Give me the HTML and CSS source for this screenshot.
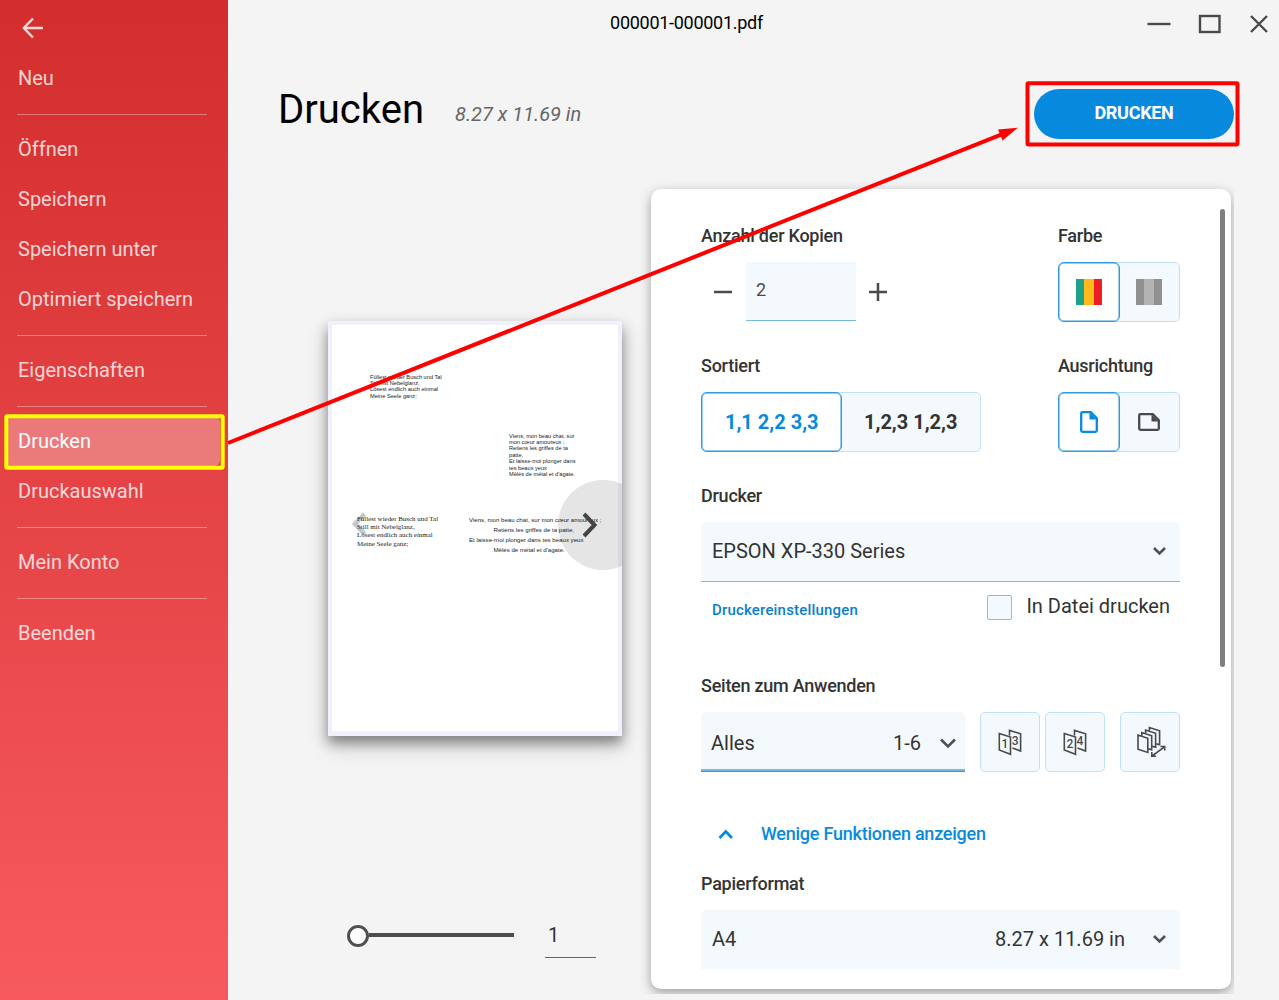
FILE: index.html
```
<!DOCTYPE html>
<html lang="de">
<head>
  <meta charset="UTF-8" />
  <meta name="viewport" content="width=device-width, initial-scale=1.0"/>
  <title>000001-000001.pdf</title>
  <link rel="stylesheet" href="styles.css">
</head>
<body>

<nav class="sidebar">
  <a class="back">
    <svg width="22" height="22" viewBox="0 0 22 22"><path d="M21 11H2M11 1.5L1.8 11L11 20.5"/></svg>
  </a>
  <a class="item">Neu</a>
  <hr>
  <a class="item">Öffnen</a>
  <a class="item">Speichern</a>
  <a class="item">Speichern unter</a>
  <a class="item">Optimiert speichern</a>
  <hr>
  <a class="item">Eigenschaften</a>
  <hr>
  <a class="item active">Drucken</a>
  <a class="item">Druckauswahl</a>
  <hr>
  <a class="item">Mein Konto</a>
  <hr>
  <a class="item">Beenden</a>
</nav>

<main class="main">
  <div class="titlebar">
    <div class="file-name">000001-000001.pdf</div>
    <svg class="window-icons" width="130" height="46" viewBox="1145 0 130 46">
      <path d="M1147.5 24H1170.5"/>
      <rect x="1200" y="16" width="19.5" height="16"/>
      <path d="M1251 16L1267 32M1267 16L1251 32"/>
    </svg>
  </div>

  <div class="header">
    <h1>Drucken</h1>
    <span class="page-size">8.27 x 11.69 in</span>
    <button class="print-btn">DRUCKEN</button>
  </div>

  <div class="content">
    <div class="preview">
      <div class="page">
        <p class="poem goethe">Füllest wieder Busch und Tal<br>Still mit Nebelglanz,<br>Lösest endlich auch einmal<br>Meine Seele ganz;</p>
        <p class="poem chat">Viens, mon beau chat, sur<br>mon cœur amoureux ;<br>Retiens les griffes de ta<br>patte,<br>Et laisse-moi plonger dans<br>tes beaux yeux<br>Mêlés de métal et d'agate.</p>
        <p class="poem goethe-serif">Füllest wieder Busch und Tal<br>Still mit Nebelglanz,<br>Lösest endlich auch einmal<br>Meine Seele ganz;</p>
        <p class="poem chat-wide">Viens, mon beau chat, sur mon cœur amoureux ;<br><span>Retiens les griffes de ta patte,</span><br>Et laisse-moi plonger dans tes beaux yeux<br><span>Mêlés de métal et d'agate.</span></p>
        <svg class="prev" width="16" height="24" viewBox="0 0 16 24"><path d="M13.5 2L4 12L13.5 22"/></svg>
        <div class="next">
          <svg width="16" height="26" viewBox="0 0 16 26"><path d="M2 2L12.5 13L2 24"/></svg>
        </div>
      </div>
      <div class="pager">
        <div class="knob"></div>
        <div class="track"></div>
        <div class="page-no">1</div>
      </div>
    </div>

    <section class="panel">
      <div class="row">
        <div class="group">
          <label>Anzahl der Kopien</label>
          <div class="copies">
            <svg width="44" height="60" viewBox="0 0 44 60"><path d="M13 30H31"/></svg>
            <div class="number">2</div>
            <svg width="44" height="60" viewBox="0 0 44 60"><path d="M13 30H31M22 21V39"/></svg>
          </div>
        </div>
        <div class="group right">
          <label>Farbe</label>
          <div class="toggle">
            <div class="option selected"><i class="stripes color"></i></div>
            <div class="option"><i class="stripes gray"></i></div>
          </div>
        </div>
      </div>

      <div class="row">
        <div class="group">
          <label>Sortiert</label>
          <div class="toggle wide">
            <div class="option selected">1,1 2,2 3,3</div>
            <div class="option">1,2,3 1,2,3</div>
          </div>
        </div>
        <div class="group right">
          <label>Ausrichtung</label>
          <div class="toggle">
            <div class="option selected">
              <svg class="doc" width="18" height="22" viewBox="0 0 18 22"><path d="M2.5 1.2H10.8L16.8 7.2V19.5Q16.8 20.8 15.5 20.8H2.5Q1.2 20.8 1.2 19.5V2.5Q1.2 1.2 2.5 1.2Z"/><path class="fold" d="M9.5 1.2V8.5H16.8Z"/></svg>
            </div>
            <div class="option">
              <svg class="doc" width="22" height="18" viewBox="0 0 22 18"><path d="M2.5 1.2H14.8L20.8 7.2V15.5Q20.8 16.8 19.5 16.8H2.5Q1.2 16.8 1.2 15.5V2.5Q1.2 1.2 2.5 1.2Z"/><path class="fold" d="M13.5 1.2V8.5H20.8Z"/></svg>
            </div>
          </div>
        </div>
      </div>

      <label>Drucker</label>
      <div class="select">
        <span>EPSON XP-330 Series</span>
        <svg class="chevron" width="14" height="10" viewBox="0 0 14 10"><path d="M2 2L7.5 7.5L13 2"/></svg>
      </div>
      <div class="printer-row">
        <a>Druckereinstellungen</a>
        <i class="checkbox"></i>
        <span>In Datei drucken</span>
      </div>

      <label>Seiten zum Anwenden</label>
      <div class="pages">
        <div class="select focus">
          <span>Alles</span>
          <span class="value">1-6</span>
          <svg class="chevron" width="18" height="12" viewBox="0 0 18 12"><path d="M2 2.5L9 9.5L16 2.5"/></svg>
        </div>
        <div class="icon-btn">
          <svg width="58" height="58" viewBox="1 1 58 58"><path d="M19.3 21.5L30.5 25V42.3L19.3 38ZM29.5 23.5V18.4L40.6 21.8V39L32.5 36"/><text x="21.6" y="36">1</text><text x="31.7" y="32.8">3</text></svg>
        </div>
        <div class="icon-btn">
          <svg width="58" height="58" viewBox="1 1 58 58"><path d="M19.3 21.5L30.5 25V42.3L19.3 38ZM29.5 23.5V18.4L40.6 21.8V39L32.5 36"/><text x="21.5" y="36">2</text><text x="31.5" y="32.8">4</text></svg>
        </div>
        <div class="icon-btn last">
          <svg width="58" height="58" viewBox="1 1 58 58"><path d="M18 23L27.8 26.3V40.5L18 37.2ZM21.8 23.5V20.5L31.7 23.8V37.8L28.5 36.8M25.6 21V18L35.6 21.3V35.3L32.4 34.3M29.4 18.5V15.5L39.6 18.8V32.8L36 31.8"/><path d="M32 44L44.5 34.8M40.5 34.5H44.7V38.5M31.8 40V44.3H36"/></svg>
        </div>
      </div>

      <div class="less">
        <svg width="16" height="10" viewBox="0 0 16 10"><path d="M1.5 9L7.8 2.5L14 9"/></svg>
        <a>Wenige Funktionen anzeigen</a>
      </div>

      <label>Papierformat</label>
      <div class="select plain">
        <span>A4</span>
        <span class="value">8.27 x 11.69 in</span>
        <svg class="chevron" width="14" height="10" viewBox="0 0 14 10"><path d="M2 2L7.5 7.5L13 2"/></svg>
      </div>
      <div class="scrollbar"></div>
    </section>
  </div>
</main>

<!-- tutorial marks over the window -->
<svg class="marks" width="1279" height="1000" viewBox="0 0 1279 1000">
  <rect class="mark-yellow" x="6.3" y="416.3" width="216.4" height="51.4" rx="1"/>
  <path class="mark-red" d="M228 443L1003 133.8"/>
  <path class="mark-head" d="M1017.8 127.7L998 129.5L1002.6 140.5Z"/>
  <rect class="mark-red" x="1027.5" y="83.3" width="210" height="61.2" rx="1"/>
</svg>

</body>
</html>
```
FILE: styles.css
```
* {
  box-sizing: border-box;
}
body {
  margin: 0;
  width: 1279px;
  height: 1000px;
  display: flex;
  overflow: hidden;
  font-family: Roboto, "Liberation Sans", sans-serif;
  font-size: 20px;
  background: #f4f4f4;
  color: #333;
}
svg {
  display: block;
  fill: none;
}

/* sidebar */
.sidebar {
  width: 228px;
  height: 1000px;
  flex: none;
  background: linear-gradient(#d32d2d, #f75a5e);
}
.back {
  display: block;
  height: 53px;
  padding: 17px 0 0 22px;
}
.back svg {
  stroke: #fadada;
  stroke-width: 2.4;
}
.item {
  display: block;
  height: 50px;
  line-height: 50px;
  margin: 0 8px 0 5px;
  padding-left: 13px;
  color: rgba(255,255,255,0.8);
}
.item.active {
  background: rgba(255,255,255,0.3);
  border-radius: 0 6px 6px 0;
  color: white;
}
.sidebar hr {
  height: 1px;
  border: none;
  margin: 11px 21px 9px 17px;
  background: rgba(255,255,255,0.35);
}

/* window */
.main {
  flex: 1;
}
.titlebar {
  height: 46px;
  display: flex;
  justify-content: flex-end;
}
.file-name {
  flex: 1;
  line-height: 45px;
  text-align: center;
  font-size: 18px;
  letter-spacing: -0.28px;
  color: black;
}
.window-icons {
  margin-right: 4px;
  stroke: #4a4a4a;
  stroke-width: 2.4;
}
.header {
  height: 143px;
  display: flex;
  padding: 43px 45px 0 50px;
}
h1 {
  margin: 0;
  font-size: 40px;
  font-weight: normal;
  line-height: 42px;
  color: black;
}
.page-size {
  margin-left: 31px;
  line-height: 50px;
  font-style: italic;
  color: #666;
}
.print-btn {
  width: 200px;
  height: 50px;
  margin-left: auto;
  border: none;
  border-radius: 25px;
  background: #078ade;
  color: white;
  font-family: inherit;
  font-size: 18px;
  font-weight: bold;
  letter-spacing: -0.3px;
  padding: 0 0 3px;
}
.content {
  display: flex;
}

/* preview */
.preview {
  width: 423px;
  padding: 132px 0 0 100px;
}
.page {
  position: relative;
  width: 294px;
  height: 415px;
  border: 4px solid #f1f1fe;
  border-bottom-width: 5px;
  background: white;
  box-shadow: 0 7px 12px rgba(0,0,0,0.4), 0 10px 22px rgba(0,0,0,0.15);
}
.poem {
  position: absolute;
  margin: 0;
  font-family: "Liberation Sans", sans-serif;
  white-space: nowrap;
  color: #222;
}
.goethe {
  left: 38px;
  top: 48.6px;
  font-size: 5.65px;
  line-height: 6.4px;
}
.chat {
  left: 177px;
  top: 107.6px;
  font-size: 5.65px;
  line-height: 6.4px;
}
.goethe-serif {
  left: 25px;
  top: 190px;
  font-family: "Liberation Serif", serif;
  font-size: 6.95px;
  line-height: 8.2px;
}
.chat-wide {
  left: 137px;
  top: 190px;
  font-size: 6.1px;
  line-height: 9.9px;
}
.chat-wide span {
  padding-left: 24.5px;
}
.prev {
  position: absolute;
  left: 19px;
  top: 187px;
  stroke: rgba(0,0,0,0.22);
  stroke-width: 4.5;
}
.next {
  position: absolute;
  right: -4px;
  top: 155px;
  width: 64px;
  height: 90px;
  padding: 32px 0 0 24px;
  overflow: hidden;
  background: radial-gradient(circle at 45px 45px, rgba(0,0,0,0.1) 44.5px, transparent 45.5px);
}
.next svg {
  stroke: #444;
  stroke-width: 4;
}
.pager {
  display: flex;
  align-items: center;
  margin: 178px 0 0 19px;
  height: 44px;
}
.knob {
  width: 22px;
  height: 22px;
  margin-bottom: 1px;
  border: 3px solid #505050;
  border-radius: 50%;
  background: white;
}
.track {
  width: 145px;
  height: 4px;
  margin-bottom: 2px;
  background: #4d4d4d;
}
.page-no {
  width: 51px;
  height: 44px;
  margin-left: 31px;
  padding-left: 3px;
  line-height: 43px;
  border-bottom: 1px solid #666;
}

/* settings */
.panel {
  position: relative;
  width: 580px;
  height: 800px;
  padding: 21px 51px 0 50px;
  border-radius: 10px;
  background: white;
  box-shadow: 0 4px 12px rgba(0,0,0,0.35);
  clip-path: inset(-12px -3px -5px -15px);
}
.scrollbar {
  position: absolute;
  right: 6px;
  top: 20px;
  width: 5px;
  height: 458px;
  border-radius: 3px;
  background: #808080;
}
.row {
  display: flex;
  justify-content: space-between;
  height: 130px;
}
.right {
  width: 122px;
}
label {
  display: block;
  height: 52px;
  line-height: 52px;
  font-size: 18px;
  font-weight: 500;
  letter-spacing: -0.25px;
}
.copies {
  display: flex;
}
.copies svg {
  stroke: #4a4a4a;
  stroke-width: 2.5;
}
.number {
  width: 110px;
  height: 59px;
  margin-left: 1px;
  padding-left: 10px;
  line-height: 55px;
  font-size: 18px;
  color: #4a4a4a;
  background: #f4f9fd;
  border-bottom: 1px solid #78b8e2;
}
.toggle {
  display: flex;
  width: 122px;
  height: 60px;
  border: 1px solid #c0e1f7;
  border-radius: 5px;
  background: #f4f9fd;
}
.toggle.wide {
  width: 280px;
}
.option {
  flex: 1;
  display: flex;
  align-items: center;
  justify-content: center;
  font-weight: bold;
}
.option.selected {
  flex: none;
  width: 61.5px;
  margin: -1px 0 -1px -1px;
  border: 1px solid #2f9ae2;
  border-radius: 6px;
  box-shadow: inset 0 0 0 0.5px #2f9ae2;
  background: white;
  color: #078ade;
}
.toggle:not(.wide) .option:last-child {
  padding-right: 1px;
}
.wide .selected {
  width: 140.5px;
  padding-left: 1px;
}
.stripes {
  width: 26px;
  height: 26px;
}
.color {
  background: linear-gradient(90deg, #1fa187 8px, #ffb91a 8px 18px, #ee1c24 18px);
}
.gray {
  background: linear-gradient(90deg, #909090 8px, #b3b3b3 8px 18px, #909090 18px);
}
.doc {
  stroke: #078ade;
  stroke-width: 2.3;
}
.fold {
  fill: #078ade;
  stroke: none;
}
.option:not(.selected) .doc {
  stroke: #4a4a4a;
}
.option:not(.selected) .fold {
  fill: #4a4a4a;
  stroke: none;
}
.select {
  display: flex;
  align-items: center;
  height: 60px;
  padding: 0 14px 1px 11px;
  border-radius: 5px 5px 0 0;
  border-bottom: 1px solid #78b8e2;
  background: #f4f9fd;
}
.chevron {
  margin-left: auto;
  stroke: #505050;
  stroke-width: 2.6;
}
.value {
  margin-left: auto;
}
.value + .chevron {
  margin-left: 27px;
}
.select.plain {
  height: 59px;
  border: none;
}
.printer-row {
  display: flex;
  align-items: center;
  height: 78px;
  padding: 0 10px 27px 11px;
}
.printer-row a {
  font-size: 15px;
  font-weight: 500;
  letter-spacing: 0.18px;
  margin-top: 4px;
  color: #0a80cc;
}
.printer-row span {
  margin-bottom: 3px;
}
.checkbox {
  width: 25px;
  height: 25px;
  margin: 0 14px 0 auto;
  border: 1px solid #7cc1f0;
  border-radius: 2px;
  background: #f4f9fd;
}
.pages {
  display: flex;
}
.select.focus {
  width: 264px;
  padding: 3px 8px 0 10px;
  margin-right: 15px;
  border-bottom: 1px solid #4392cb;
  box-shadow: inset 0 -2px #78b8e2;
}
.focus .value + .chevron {
  margin-left: 18px;
}
.icon-btn {
  width: 60px;
  height: 60px;
  margin-right: 5px;
  border: 1px solid #c0e1f7;
  border-radius: 5px;
  background: #f4f9fd;
}
.icon-btn.last {
  margin: 0 0 0 10px;
}
.icon-btn svg {
  stroke: #4a4a4a;
  stroke-width: 1.6;
}
.icon-btn text {
  fill: #4a4a4a;
  stroke: none;
  font-size: 12px;
  font-weight: 500;
}
.less {
  display: flex;
  align-items: center;
  height: 86px;
  padding: 38px 0 0 17px;
}
.less svg {
  stroke: #078ade;
  stroke-width: 2.7;
}
.less a {
  margin: 0 0 2px 27px;
  font-size: 18px;
  font-weight: 500;
  letter-spacing: -0.24px;
  color: #078ade;
}

/* marks */
.marks {
  position: absolute;
  left: 0;
  top: 0;
}
.mark-yellow {
  stroke: #ffff00;
  stroke-width: 4;
}
.mark-red {
  stroke: #ff0000;
  stroke-width: 4;
}
.mark-head {
  fill: #ff0000;
}
```
